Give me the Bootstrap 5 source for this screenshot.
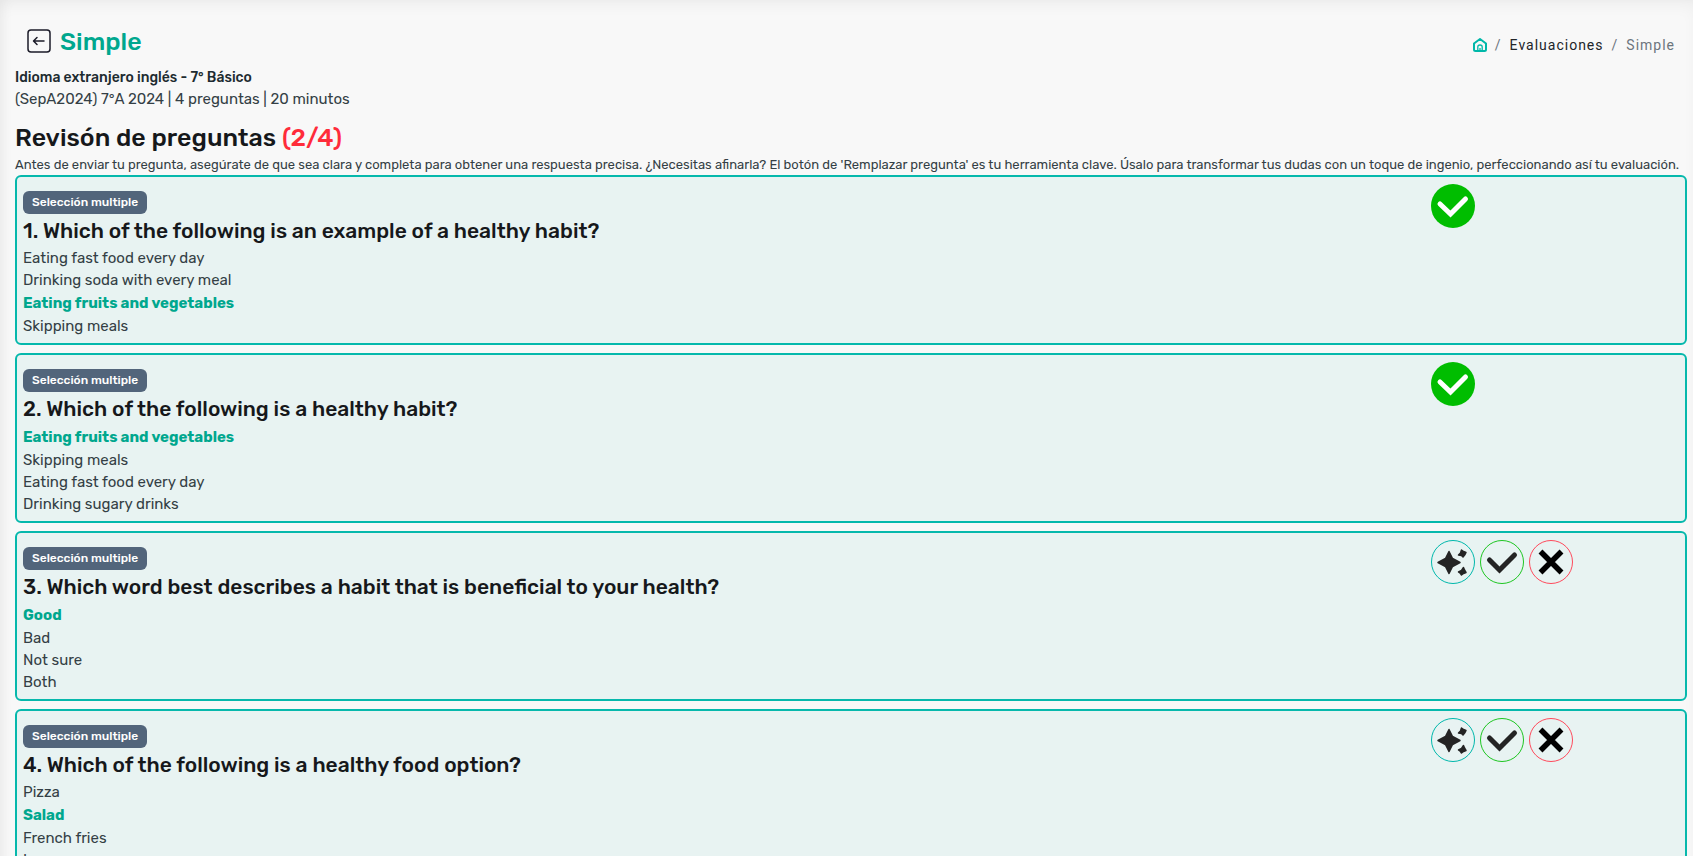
<!DOCTYPE html>
<html lang="es">
<head>
<meta charset="utf-8">
<meta name="viewport" content="width=device-width, initial-scale=1">
<title>Simple</title>
<link href="https://cdn.jsdelivr.net/npm/bootstrap@5.3.0/dist/css/bootstrap.min.css" rel="stylesheet">
<style>
  body { font-family: Rubik, Roboto, sans-serif; font-size: 15px; line-height: 22px; color: #343f45; background: #f8f8f8; }
  .page { min-height: 100vh; padding: 26px 6px 8px 15px; overflow: hidden; box-shadow: inset 0 8px 16px -4px rgba(0,0,0,.05), inset 8px 0 12px -4px rgba(0,0,0,.04); }
  .page-head { height: 42px; padding: 0 12px; }
  .back-link { color: #1b1b28; line-height: 0; padding-top: 3px; margin-right: 9px; }
  .page-title { font-size: 25px; line-height: 32px; font-weight: 500; color: #00a78e; }
  .crumbs { --bs-breadcrumb-divider-color: #6c757d; --bs-breadcrumb-item-active-color: #6c757d; --bs-breadcrumb-item-padding-x: 8px; font-family: Roboto, sans-serif; font-size: 14px; letter-spacing: 1px; }
  .crumbs a { color: #212529; text-decoration: none; }
  .crumbs .home-link { color: #00b8a9; }
  .crumbs svg { vertical-align: -2px; }
  .subject { font-size: 14px; font-weight: 500; line-height: 20px; color: #1d2b30; }
  .review-title { font-size: 25px; line-height: 32px; font-weight: 500; color: #16181b; }
  .pending { color: #ff2b3a; }
  .hint { font-size: 13px; line-height: 21px; }
  .question { background: #e8f3f2; border: 2px solid #06b8ac; border-radius: 6px; padding: 7px 6px 6px; }
  .question > .row { --bs-gutter-x: 30px; margin: 0 -15px 0 0; }
  .question > .row > .col-10 { padding-left: 0; }
  .kind { font-size: 12px; line-height: 15px; font-weight: 500; padding: 4px 9px; border-radius: 6px; background: #52657b; margin-top: 7px; }
  .prompt { font-size: 21px; line-height: 33px; font-weight: 500; color: #16181b; }
  .right-answer { font-weight: 700; line-height: 24px; color: #00a78e; }
  .actions { gap: 5px; }
  .round-btn { width: 44px; height: 44px; padding: 0; border: 1px solid; border-radius: 50%; background: none; color: #242424; }
  .round-btn svg { display: block; }
  .approved { width: 44px; height: 44px; display: block; }
  .b-new { border-color: #00b8ac; } .b-ok { border-color: #1ec622; } .b-no { border-color: #ff4a5c; color: #000; }
</style>
</head>
<body>
<svg width="0" height="0" class="d-none" aria-hidden="true">
  <symbol id="done" viewBox="0 0 44 44"><circle cx="22" cy="22" r="22" fill="#00bd00"/><path d="M9 20 19.500 30 34.500 15" fill="none" stroke="#fff" stroke-width="5" stroke-linecap="round"/></symbol>
  <symbol id="tick" viewBox="0 0 42 42"><path d="M8.500 19 18.500 29 33.500 14" fill="none" stroke="currentColor" stroke-width="5" stroke-linecap="round"/></symbol>
  <symbol id="cross" viewBox="0 0 42 42"><path d="M10.500 10.500 31.500 31.500M31.500 10.500 10.500 31.500" stroke="currentColor" stroke-width="5.500"/></symbol>
  <symbol id="sparks" viewBox="0 0 42 42"><g fill="currentColor" stroke="currentColor" stroke-width="1.500" stroke-linejoin="round"><path d="M17 10.500 20.500 17.500 28 21.500 20.500 25.500 17 32.500 13.500 25.500 6 21.500 13.500 17.500Z"/><path d="M29.500 9 31.500 10.500 34 11.500 33 13.500 31 16 29.500 14.500 26.500 14 28.500 12Z"/><path d="M31.500 26.500 32.500 29 34 31.500 31.500 32.500 29.500 34 28.500 32.500 26.500 31 29.500 29.500Z"/></g></symbol>
</svg>
<main class="page">
  <header class="page-head d-flex justify-content-between align-items-start">
    <div class="d-flex align-items-start">
      <a href="#" class="back-link" aria-label="Volver"><svg width="24" height="24" viewBox="0 0 24 24" fill="none" stroke="currentColor" stroke-width="1.500"><rect x="1" y="1" width="22" height="22" rx="3"/><path d="M17 12H7M10 8.500 6.500 12 10 15.500" stroke-linecap="round" stroke-linejoin="round"/></svg></a>
      <h1 class="page-title mb-0">Simple</h1>
    </div>
    <nav aria-label="Ruta">
      <ol class="breadcrumb crumbs mb-0 pt-2">
        <li class="breadcrumb-item"><a href="#" class="home-link" aria-label="Inicio"><svg width="14" height="14" viewBox="0 0 14 14" fill="none" stroke="currentColor" stroke-width="2" stroke-linejoin="round"><path d="M1 5.500 7 1l6 4.500V11.500Q13 13 11.500 13H2.500Q1 13 1 11.500Z"/><path d="M4.800 13V9Q4.800 7 7 7T9.200 9V13M7 10V13" stroke-width="1.300"/></svg></a></li>
        <li class="breadcrumb-item"><a href="#">Evaluaciones</a></li>
        <li class="breadcrumb-item active" aria-current="page">Simple</li>
      </ol>
    </nav>
  </header>

  <div class="subject">Idioma extranjero inglés - 7° Básico</div>
  <div>(SepA2024) 7°A 2024 | 4 preguntas | 20 minutos</div>
  <h2 class="review-title mt-2 mb-0 pt-1">Revisón de preguntas <span class="pending">(2/4)</span></h2>
  <p class="hint mb-0">Antes de enviar tu pregunta, asegúrate de que sea clara y completa para obtener una respuesta precisa. ¿Necesitas afinarla? El botón de 'Remplazar pregunta' es tu herramienta clave. Úsalo para transformar tus dudas con un toque de ingenio, perfeccionando así tu evaluación.</p>

  <section class="question mb-2">
    <div class="row">
      <div class="col-10">
        <span class="badge kind d-table">Selección multiple</span>
        <h3 class="prompt mb-0">1. Which of the following is an example of a healthy habit?</h3>
        <ul class="list-unstyled mb-0">
          <li>Eating fast food every day</li>
          <li>Drinking soda with every meal</li>
          <li class="right-answer">Eating fruits and vegetables</li>
          <li>Skipping meals</li>
        </ul>
      </div>
      <div class="col-2"><svg class="approved" role="img" aria-label="Aprobada"><use href="#done"/></svg></div>
    </div>
  </section>

  <section class="question mb-2">
    <div class="row">
      <div class="col-10">
        <span class="badge kind d-table">Selección multiple</span>
        <h3 class="prompt mb-0">2. Which of the following is a healthy habit?</h3>
        <ul class="list-unstyled mb-0">
          <li class="right-answer">Eating fruits and vegetables</li>
          <li>Skipping meals</li>
          <li>Eating fast food every day</li>
          <li>Drinking sugary drinks</li>
        </ul>
      </div>
      <div class="col-2"><svg class="approved" role="img" aria-label="Aprobada"><use href="#done"/></svg></div>
    </div>
  </section>

  <section class="question mb-2">
    <div class="row">
      <div class="col-10">
        <span class="badge kind d-table">Selección multiple</span>
        <h3 class="prompt mb-0">3. Which word best describes a habit that is beneficial to your health?</h3>
        <ul class="list-unstyled mb-0">
          <li class="right-answer">Good</li>
          <li>Bad</li>
          <li>Not sure</li>
          <li>Both</li>
        </ul>
      </div>
      <div class="col-2 d-flex align-items-start actions">
        <button type="button" class="round-btn b-new" aria-label="Remplazar pregunta"><svg width="42" height="42"><use href="#sparks"/></svg></button>
        <button type="button" class="round-btn b-ok" aria-label="Aprobar"><svg width="42" height="42"><use href="#tick"/></svg></button>
        <button type="button" class="round-btn b-no" aria-label="Descartar"><svg width="42" height="42"><use href="#cross"/></svg></button>
      </div>
    </div>
  </section>

  <section class="question mb-2">
    <div class="row">
      <div class="col-10">
        <span class="badge kind d-table">Selección multiple</span>
        <h3 class="prompt mb-0">4. Which of the following is a healthy food option?</h3>
        <ul class="list-unstyled mb-0">
          <li>Pizza</li>
          <li class="right-answer">Salad</li>
          <li>French fries</li>
          <li>Ice cream</li>
        </ul>
      </div>
      <div class="col-2 d-flex align-items-start actions">
        <button type="button" class="round-btn b-new" aria-label="Remplazar pregunta"><svg width="42" height="42"><use href="#sparks"/></svg></button>
        <button type="button" class="round-btn b-ok" aria-label="Aprobar"><svg width="42" height="42"><use href="#tick"/></svg></button>
        <button type="button" class="round-btn b-no" aria-label="Descartar"><svg width="42" height="42"><use href="#cross"/></svg></button>
      </div>
    </div>
  </section>
</main>
<script src="https://cdn.jsdelivr.net/npm/bootstrap@5.3.0/dist/js/bootstrap.bundle.min.js"></script>
</body>
</html>
